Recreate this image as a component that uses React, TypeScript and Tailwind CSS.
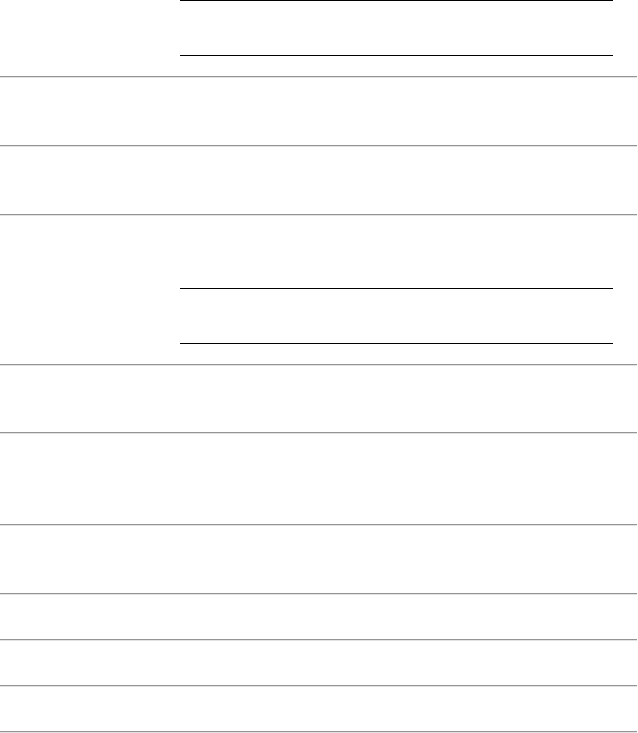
import React from "react";

function Divider() {
  return <div className="h-[2px] w-[637px] border-t border-b border-t-[#949494] border-b-[#e2e2e2]" />;
}

function Field() {
  return <div className="ml-[180px] h-[56px] w-[433px] border-y border-black" />;
}

export default function App() {
  return (
    <div className="min-h-screen w-[638px] bg-white" style={{ fontFamily: '"Liberation Sans", Arial, sans-serif' }}>
      <section className="h-[76px]">
        <Field />
      </section>
      <Divider />
      <section className="h-[67px]" />
      <Divider />
      <section className="h-[67px]" />
      <Divider />
      <section className="flex h-[148px] flex-col pt-[72px]">
        <Field />
      </section>
      <Divider />
      <section className="h-[66px]" />
      <Divider />
      <section className="h-[90px]" />
      <Divider />
      <section className="h-[67px]" />
      <Divider />
      <section className="h-[44px]" />
      <Divider />
      <section className="h-[44px]" />
      <Divider />
      <section className="h-[44px]" />
      <Divider />
    </div>
  );
}
